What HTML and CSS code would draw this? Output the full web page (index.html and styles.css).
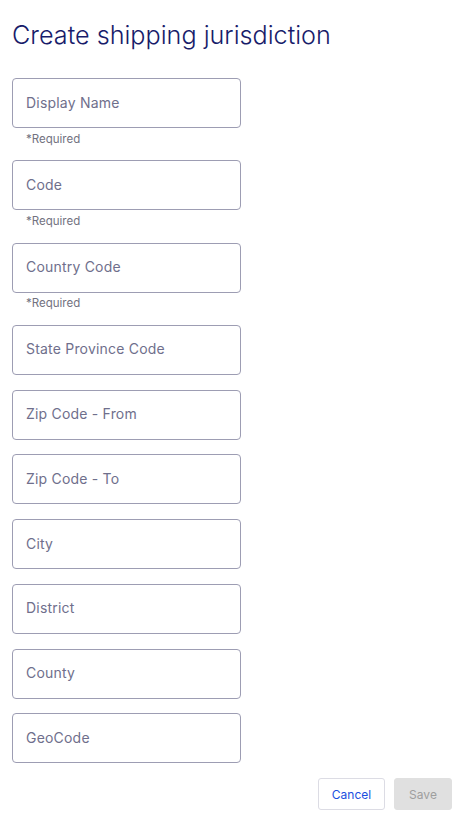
FILE: index.html
```html
<!DOCTYPE html>
<html lang="en">
<head>
<meta charset="utf-8">
<title>Create shipping jurisdiction</title>
<link rel="stylesheet" href="styles.css">
</head>
<body>
<main class="page">
  <h1 class="title">Create shipping jurisdiction</h1>
  <form class="form">
    <div class="field">
      <input class="input" type="text" placeholder="Display Name">
      <div class="helper">*Required</div>
    </div>
    <div class="field">
      <input class="input" type="text" placeholder="Code">
      <div class="helper">*Required</div>
    </div>
    <div class="field">
      <input class="input" type="text" placeholder="Country Code">
      <div class="helper">*Required</div>
    </div>
    <div class="field">
      <input class="input" type="text" placeholder="State Province Code">
    </div>
    <div class="field">
      <input class="input" type="text" placeholder="Zip Code - From">
    </div>
    <div class="field">
      <input class="input" type="text" placeholder="Zip Code - To">
    </div>
    <div class="field">
      <input class="input" type="text" placeholder="City">
    </div>
    <div class="field">
      <input class="input" type="text" placeholder="District">
    </div>
    <div class="field">
      <input class="input" type="text" placeholder="County">
    </div>
    <div class="field">
      <input class="input" type="text" placeholder="GeoCode">
    </div>
    <div class="actions">
      <button type="button" class="btn btn-cancel">Cancel</button>
      <button type="button" class="btn btn-save" disabled>Save</button>
    </div>
  </form>
</main>
</body>
</html>
```
FILE: styles.css
```css
* { box-sizing: border-box; }
html, body {
  margin: 0;
  padding: 0;
  background: #ffffff;
  font-family: Inter, "Noto Sans", sans-serif;
}
.page {
  padding: 0 8px 0 12px;
}
.title {
  margin: 0;
  padding-top: 17px;
  font-size: 25.2px;
  line-height: 36px;
  font-weight: 300;
  color: #181c6a;
  letter-spacing: 0;
}
.form {
  display: flex;
  flex-direction: column;
  gap: 14.75px;
  margin-top: 25px;
}
.field {
  display: flex;
  flex-direction: column;
}
.input {
  width: 229px;
  height: 50px;
  border: 1px solid #9d9db3;
  border-radius: 4px;
  padding: 0 13px 2px;
  font-family: Inter, "Noto Sans", sans-serif;
  font-size: 14px;
  letter-spacing: 0.2px;
  color: #2a2a40;
  background: #fff;
  outline: none;
}
.input::placeholder {
  color: #6f6f8c;
  opacity: 1;
}
.helper {
  padding: 3.5px 0 0 14px;
  font-size: 11.5px;
  line-height: 14.08px;
  color: #72727f;
}
.actions {
  display: flex;
  justify-content: flex-end;
  gap: 9px;
  margin-top: 0;
}
.btn {
  height: 32px;
  border-radius: 3px;
  font-family: Inter, "Noto Sans", sans-serif;
  font-size: 12px;
  padding: 0 12px;
}
.btn-cancel {
  width: 67px;
  background: #fff;
  border: 1px solid #dcdce4;
  color: #1a4fe0;
}
.btn-save {
  width: 58px;
  background: #e0e0e0;
  border: 1px solid #e0e0e0;
  color: #9e9e9e;
}
```
